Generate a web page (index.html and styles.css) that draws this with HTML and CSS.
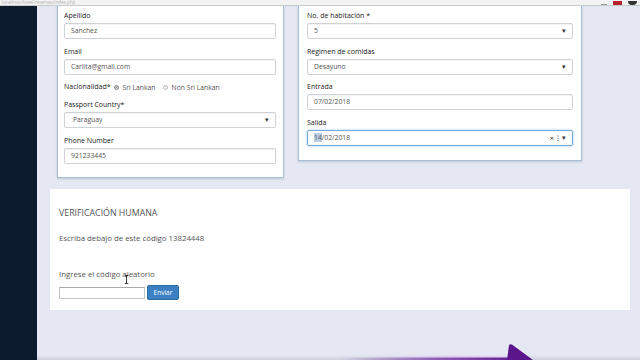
FILE: index.html
```html
<!DOCTYPE html>
<html lang="es">
<head>
<meta charset="utf-8">
<title>Reserva</title>
<link rel="stylesheet" href="styles.css">
</head>
<body>
<div class="browserbar">
  <span class="url">localhost/hotel/reservas/index.php</span>
  <span class="bar-icons">
    <span class="ic-star"></span>
    <span class="ic-red"></span>
    <span class="ic-circle"></span>
  </span>
</div>
<div class="app">
  <aside class="sidebar"></aside>
  <main class="content">
    <div class="forms">
      <section class="card card-left">
        <div class="group">
          <label class="lbl">Apellido</label>
          <div class="field">Sanchez</div>
        </div>
        <div class="group">
          <label class="lbl">Email</label>
          <div class="field">Carlita@gmail.com</div>
        </div>
        <div class="group radio-row">
          <label class="lbl">Nacionalidad*</label>
          <span class="radio checked"></span><span class="opt">Sri Lankan</span>
          <span class="radio"></span><span class="opt">Non Sri Lankan</span>
        </div>
        <div class="group">
          <label class="lbl">Passport Country*</label>
          <div class="field select"><span class="sel-val">Paraguay</span><span class="caret">▾</span></div>
        </div>
        <div class="group last">
          <label class="lbl">Phone Number</label>
          <div class="field">921233445</div>
        </div>
      </section>
      <section class="card card-right">
        <div class="group">
          <label class="lbl">No. de habitación *</label>
          <div class="field select"><span>5</span><span class="caret">▾</span></div>
        </div>
        <div class="group">
          <label class="lbl">Régimen de comidas</label>
          <div class="field select"><span>Desayuno</span><span class="caret">▾</span></div>
        </div>
        <div class="group">
          <label class="lbl">Entrada</label>
          <div class="field">07/02/2018</div>
        </div>
        <div class="group last">
          <label class="lbl">Salida</label>
          <div class="field focus"><span><span class="selected">14</span>/02/2018</span><span class="date-ctrl"><span class="x">×</span><span class="spin">⁝</span><span class="caret">▾</span></span></div>
        </div>
      </section>
    </div>
    <section class="verify">
      <h2 class="v-title">VERIFICACIÓN HUMANA</h2>
      <p class="v-text">Escriba debajo de este código 13824448</p>
      <p class="v-prompt">Ingrese el código aleatorio</p>
      <div class="v-row">
        <span class="v-input"></span>
        <button class="btn">Enviar</button>
      </div>
      <svg class="cursor" width="5" height="10" viewBox="0 0 5 10"><path d="M0.5 0.5h4M2.5 0.5v9M0.5 9.5h4" stroke="#222" stroke-width="1" fill="none"/></svg>
    </section>
    <div class="bottom-shade"></div>
    <svg class="arrow" width="300" height="20" viewBox="0 0 300 20">
      <defs>
        <linearGradient id="g" x1="0" x2="1" y1="0" y2="0">
          <stop offset="0" stop-color="#6a2a9a" stop-opacity="0"/>
          <stop offset="0.5" stop-color="#7a3aa8" stop-opacity="0.75"/>
          <stop offset="1" stop-color="#5b168c"/>
        </linearGradient>
        <linearGradient id="glow" x1="0" x2="1" y1="0" y2="0">
          <stop offset="0" stop-color="#e8c8f4" stop-opacity="0"/>
          <stop offset="0.6" stop-color="#e8c8f4" stop-opacity="0.8"/>
          <stop offset="1" stop-color="#e8c8f4" stop-opacity="0.3"/>
        </linearGradient>
      </defs>
      <rect x="60" y="15.5" width="160" height="2" fill="url(#glow)"/>
      <rect x="40" y="17.5" width="185" height="2.5" fill="url(#g)"/>
      <path d="M209 5 Q211 3 214 6 L233 20 L207 20 Z" fill="#5b168c"/>
    </svg>
  </main>
</div>
</body>
</html>
```
FILE: styles.css
```css
* { box-sizing: border-box; }
html, body { margin: 0; padding: 0; }
body {
  width: 640px;
  height: 360px;
  overflow: hidden;
  font-family: "Open Sans", "Liberation Sans", sans-serif;
  background: #e5e8f2;
  display: flex;
  flex-direction: column;
}
.browserbar {
  height: 6px;
  background: #f3f3f3;
  border-bottom: 1px solid #c9c9c9;
  display: flex;
  justify-content: space-between;
  align-items: center;
  overflow: hidden;
  position: relative;
  z-index: 2;
}
.url {
  font-size: 4.5px;
  line-height: 5px;
  color: #b0b0b0;
  padding-left: 2px;
  white-space: nowrap;
}
.bar-icons {
  display: flex;
  align-items: flex-end;
  align-self: flex-end;
  gap: 6px;
  padding-right: 3px;
}
.ic-star { width: 6px; height: 3px; border-bottom: 1px solid #999; }
.ic-red { width: 9px; height: 4px; background: #b8222a; }
.ic-circle { width: 9px; height: 4px; border-radius: 0 0 5px 5px; background: #333; }
.app {
  flex: 1;
  display: flex;
  min-height: 0;
}
.sidebar {
  width: 37px;
  background: #0b1a2d;
  flex: none;
}
.content {
  flex: 1;
  background: #e5e8f2;
  position: relative;
  overflow: hidden;
}
.forms {
  display: flex;
  align-items: flex-start;
  gap: 14px;
  margin-top: -4px;
  padding-left: 20px;
}
.card {
  background: #fff;
  border: 1px solid #a9bfd6;
  box-shadow: 0 1px 2px rgba(60, 90, 130, 0.25);
  padding: 8px 7px 13px 6px;
}
.card-left { width: 227px; }
.card-right { width: 284px; padding: 8px 8px 14px 8px; }
.group { margin-bottom: 7.7px; }
.group.last { margin-bottom: 0; }
.lbl {
  display: block;
  font-size: 7px;
  line-height: 10px;
  font-weight: 400;
  color: #222;
  margin-bottom: 2px;
}
.field {
  height: 16px;
  border: 1px solid #cfd3d8;
  border-radius: 2px;
  padding: 0 6px;
  font-size: 6.8px;
  line-height: 14px;
  color: #555;
  display: flex;
  align-items: center;
  justify-content: space-between;
  box-shadow: inset 0 1px 1px rgba(0,0,0,0.05);
}
.field.select .sel-val { padding-left: 2px; }
.caret { font-size: 7px; color: #333; }
.field.focus {
  border-color: #7aa8d6;
  box-shadow: 0 0 3px rgba(102, 175, 233, 0.6);
}
.selected { background: #b9cde3; }
.date-ctrl { display: flex; gap: 3px; align-items: center; color: #333; }
.x { font-size: 8px; line-height: 8px; }
.spin { font-size: 8px; line-height: 8px; }
.radio-row {
  display: flex;
  align-items: center;
  height: 10px;
  margin-bottom: 8px;
}
.radio-row .lbl { margin: 0 3px 0 0; }
.radio {
  width: 5px;
  height: 5px;
  border-radius: 50%;
  border: 1px solid #bbb;
  background: #eee;
  margin-right: 4px;
}
.radio.checked { background: #666; border-color: #999; box-shadow: inset 0 0 0 1px #ddd; }
.opt {
  font-size: 6.8px;
  color: #555;
  margin-right: 7px;
}
.verify {
  position: relative;
  margin: 11px 0 0 13px;
  width: 580px;
  background: #fff;
  padding: 18px 9px 10px 9px;
  color: #555;
}
.v-title {
  margin: 0;
  font-size: 8.8px;
  font-weight: 400;
  line-height: 12px;
  color: #555;
}
.v-text {
  margin: 13.5px 0 0 0;
  font-size: 7.8px;
  line-height: 11px;
}
.v-prompt {
  margin: 25px 0 0 0;
  font-size: 7.8px;
  line-height: 11px;
}
.v-row {
  display: flex;
  align-items: center;
  gap: 2px;
  margin-top: 5.5px;
  height: 15px;
}
.v-input {
  width: 86px;
  height: 12px;
  border: 1px solid #c4c4c4;
  border-top-color: #aaa;
  background: #fff;
}
.btn {
  width: 32px;
  height: 15px;
  padding: 0;
  border: 1px solid #2e6da4;
  border-radius: 2px;
  background: #3b80c2;
  color: #fff;
  font-family: "Open Sans", "Liberation Sans", sans-serif;
  font-size: 6.5px;
}
.cursor {
  position: absolute;
  left: 74px;
  top: 86px;
  height: 9px;
}
.bottom-shade {
  position: absolute;
  left: 0;
  right: 0;
  bottom: 0;
  height: 5px;
  background: linear-gradient(to bottom, rgba(200,203,215,0), rgba(190,193,205,0.6));
}
.arrow {
  position: absolute;
  left: 263px;
  bottom: 0;
}
```
